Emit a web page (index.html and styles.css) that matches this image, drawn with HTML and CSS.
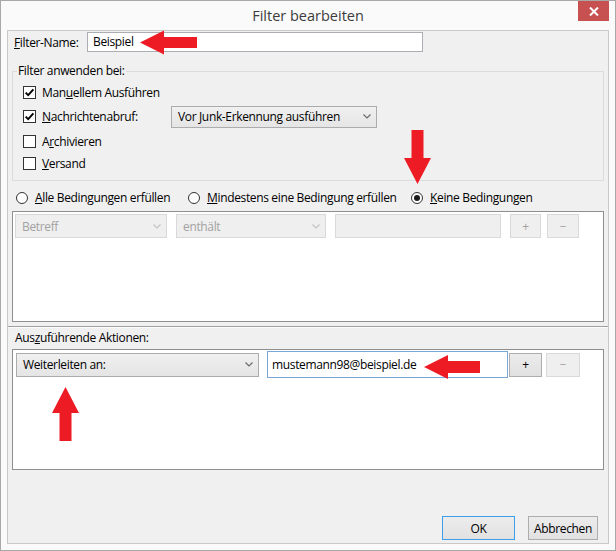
FILE: index.html
```html
<!DOCTYPE html>
<html lang="de">
<head>
<meta charset="utf-8">
<title>Filter bearbeiten</title>
<link rel="stylesheet" href="styles.css">
</head>
<body>
<div class="window">
  <div class="titlebar">
    <div class="title">Filter bearbeiten</div>
    <div class="close">
      <svg width="10" height="9" viewBox="0 0 10 9"><path d="M1 0.5 L9 8.5 M9 0.5 L1 8.5" stroke="#fff" stroke-width="2" fill="none"/></svg>
    </div>
  </div>
  <div class="client">
    <div class="name-row">
      <span class="name-label"><u>F</u>ilter-Name:</span>
      <div class="textbox name-box">Beispiel</div>
    </div>

    <fieldset class="group">
      <legend>Filter anwenden bei:</legend>
      <div class="cb-row r1">
        <span class="checkbox checked"><svg width="11" height="11" viewBox="0 0 11 11"><path d="M1.6 5.6 L4.2 8.2 L9.4 2.4" stroke="#000" stroke-width="1.9" fill="none"/></svg></span>
        <span class="cb-text">Man<u>u</u>ellem Ausführen</span>
      </div>
      <div class="cb-row r2">
        <span class="checkbox checked"><svg width="11" height="11" viewBox="0 0 11 11"><path d="M1.6 5.6 L4.2 8.2 L9.4 2.4" stroke="#000" stroke-width="1.9" fill="none"/></svg></span>
        <span class="cb-text cb-wide"><u>N</u>achrichtenabruf:</span>
        <div class="select junk-select">
          <span>Vor Junk-Erkennung ausführen</span>
          <svg class="chev" width="8" height="5" viewBox="0 0 8 5"><path d="M0.5 0.5 L4 4 L7.5 0.5" stroke="#6b6b6b" stroke-width="1.2" fill="none"/></svg>
        </div>
      </div>
      <div class="cb-row r3">
        <span class="checkbox"></span>
        <span class="cb-text">A<u>r</u>chivieren</span>
      </div>
      <div class="cb-row r4">
        <span class="checkbox"></span>
        <span class="cb-text"><u>V</u>ersand</span>
      </div>
    </fieldset>

    <div class="radio-row">
      <div class="radio-item ri1"><span class="radio"></span><span><u>A</u>lle Bedingungen erfüllen</span></div>
      <div class="radio-item ri2"><span class="radio"></span><span><u>M</u>indestens eine Bedingung erfüllen</span></div>
      <div class="radio-item ri3"><span class="radio selected"><span class="dot"></span></span><span><u>K</u>eine Bedingungen</span></div>
    </div>

    <div class="listbox conditions">
      <div class="cond-row">
        <div class="select disabled betreff">
          <span>Betreff</span>
          <svg class="chev" width="8" height="5" viewBox="0 0 8 5"><path d="M0.5 0.5 L4 4 L7.5 0.5" stroke="#c4c4c4" stroke-width="1.2" fill="none"/></svg>
        </div>
        <div class="select disabled enthaelt">
          <span>enthält</span>
          <svg class="chev" width="8" height="5" viewBox="0 0 8 5"><path d="M0.5 0.5 L4 4 L7.5 0.5" stroke="#c4c4c4" stroke-width="1.2" fill="none"/></svg>
        </div>
        <div class="textbox disabled-box value-box"></div>
        <div class="btn small disabled plus1">+</div>
        <div class="btn small disabled minus1">−</div>
      </div>
    </div>

    <div class="splitter"></div>

    <div class="actions-label">Aus<u>z</u>uführende Aktionen:</div>

    <div class="listbox actions">
      <div class="act-row">
        <div class="select forward">
          <span>Weiterleiten an:</span>
          <svg class="chev" width="8" height="5" viewBox="0 0 8 5"><path d="M0.5 0.5 L4 4 L7.5 0.5" stroke="#6b6b6b" stroke-width="1.2" fill="none"/></svg>
        </div>
        <div class="textbox email-box">mustemann98@beispiel.de</div>
        <div class="btn small plus2">+</div>
        <div class="btn small disabled minus2">−</div>
      </div>
    </div>

    <div class="dialog-buttons">
      <div class="btn default ok">OK</div>
      <div class="btn cancel">Abbrechen</div>
    </div>
  </div>

  <svg class="arrows" width="616" height="551" viewBox="0 0 616 551">
    <polygon fill="#ed1c24" points="140,42.5 164,30.5 164,37 197,37 197,48 164,48 164,54.5"/>
    <polygon fill="#ed1c24" points="411.5,130 423.5,130 423.5,158 431,158 417.5,184 404,158 411.5,158"/>
    <polygon fill="#ed1c24" points="424,367 448,355 448,361 480,361 480,373 448,373 448,379"/>
    <polygon fill="#ed1c24" points="65.5,387 79,413 71.5,413 71.5,441 59.5,441 59.5,413 52,413"/>
  </svg>
</div>
</body>
</html>
```

FILE: styles.css
```css
* { box-sizing: border-box; }
html, body { margin: 0; padding: 0; }
body {
  width: 616px;
  height: 551px;
  overflow: hidden;
  background: #ffffff;
  font-family: "Open Sans", "Noto Sans", "Liberation Sans", sans-serif;
  font-size: 12px;
  letter-spacing: -0.35px;
  color: #000;
}
u { text-decoration-thickness: 1px; text-underline-offset: 1px; }

.window {
  position: relative;
  width: 616px;
  height: 551px;
  border: 1px solid #a8a8a8;
  background: #fafafa;
  padding: 0 6px 6px 6px;
  display: flex;
  flex-direction: column;
}

.titlebar {
  height: 29px;
  display: grid;
  grid-template-columns: 1fr auto 1fr;
  align-items: start;
}
.title {
  grid-column: 2;
  font-size: 14.5px;
  letter-spacing: 0;
  color: #3c3c3c;
  line-height: 29px;
}
.close {
  grid-column: 3;
  justify-self: end;
  width: 31px;
  height: 20px;
  background: #c75050;
  display: flex;
  align-items: center;
  justify-content: center;
}

.client {
  flex: 1;
  background: #f0f0f0;
  border: 1px solid #c9c9c9;
  display: flex;
  flex-direction: column;
}

.name-row {
  display: flex;
  align-items: center;
  margin-top: 1px;
  height: 20px;
  padding-left: 6px;
}
.name-label { width: 73px; }

.textbox {
  height: 20px;
  background: #fff;
  border: 1px solid #abadb3;
  padding: 0 5px;
  line-height: 18px;
  white-space: nowrap;
}
.name-box { width: 336px; }

.group {
  margin: 11px 4px 0 4px;
  border: 1px solid #dcdcdc;
  padding: 3px 5px 6px 4px;
  min-width: 0;
}
.group legend {
  padding: 0 1px;
  line-height: 16px;
  height: 16px;
}
.cb-row {
  display: flex;
  align-items: center;
  margin-left: 6px;
  height: 21px;
}
.cb-row.r2 { height: 27px; }
.cb-row.r3 { height: 23px; }

.checkbox {
  width: 13px;
  height: 13px;
  border: 1px solid #333;
  background: #fff;
  display: flex;
  align-items: center;
  justify-content: center;
  flex: none;
}
.cb-text { margin-left: 6px; white-space: nowrap; }
.cb-wide { width: 129px; }

.select {
  height: 22px;
  border: 1px solid #acacac;
  background: linear-gradient(#f0f0f0, #e5e5e5);
  display: flex;
  align-items: center;
  justify-content: space-between;
  padding: 0 5px 0 6px;
  white-space: nowrap;
}
.select.disabled {
  background: #efefef;
  border-color: #d9d9d9;
  color: #a2a2a2;
}
.junk-select { width: 206px; }

.radio-row {
  display: flex;
  align-items: center;
  height: 21px;
  margin-top: 6px;
  padding-left: 8px;
}
.radio-item { display: flex; align-items: center; white-space: nowrap; }
.radio-item .radio { margin-right: 7px; }
.ri1 { width: 172px; }
.ri2 { width: 223px; }
.radio {
  width: 12px;
  height: 12px;
  border: 1px solid #333;
  border-radius: 50%;
  background: #fff;
  display: flex;
  align-items: center;
  justify-content: center;
  flex: none;
}
.dot {
  width: 6px;
  height: 6px;
  border-radius: 50%;
  background: #1a1a1a;
}

.listbox {
  margin: 0 4px;
  background: #fff;
  border: 1px solid #8e8f8f;
}
.conditions {
  margin-top: 3px;
  height: 111px;
  padding: 2px;
}
.cond-row {
  display: flex;
  align-items: center;
  height: 24px;
}
.cond-row .select { height: 24px; }
.betreff { width: 152px; }
.enthaelt { width: 150px; margin-left: 9px; }
.value-box { width: 166px; height: 24px; margin-left: 9px; }
.disabled-box { background: #efefef; border-color: #d9d9d9; }

.btn {
  display: flex;
  align-items: center;
  justify-content: center;
  border: 1px solid #adadad;
  background: linear-gradient(#ececec, #e1e1e1);
  white-space: nowrap;
}
.btn.disabled {
  background: #efefef;
  border-color: #d9d9d9;
  color: #a2a2a2;
}
.btn.small { height: 24px; }
.plus1 { width: 31px; margin-left: 9px; }
.minus1 { width: 32px; margin-left: 6px; }

.splitter {
  margin-top: 4px;
  height: 2px;
  border-top: 1px solid #a0a0a0;
  border-bottom: 1px solid #fdfdfd;
}
.actions-label {
  margin-top: 2px;
  height: 16px;
  line-height: 16px;
  padding-left: 7px;
}
.actions {
  margin-top: 3px;
  height: 121px;
  padding: 1px 3px;
}
.act-row {
  display: flex;
  align-items: center;
  height: 27px;
}
.act-row .select { height: 24px; }
.forward { width: 243px; }
.email-box {
  width: 241px;
  height: 27px;
  line-height: 25px;
  margin-left: 8px;
  border-color: #7aa7d8;
  padding-left: 4px;
}
.plus2 { width: 33px; margin-left: 1px; }
.minus2 { width: 34px; margin-left: 4px; }

.dialog-buttons {
  margin-top: auto;
  margin-bottom: 3px;
  margin-right: 10px;
  display: flex;
  justify-content: flex-end;
  gap: 13px;
}
.dialog-buttons .btn { height: 24px; }
.ok {
  width: 73px;
  border-color: #3c9fe8;
  background: linear-gradient(#ececec, #e1e1e1);
}
.cancel { width: 70px; }

.arrows {
  position: absolute;
  left: -1px;
  top: -1px;
  pointer-events: none;
}
```
